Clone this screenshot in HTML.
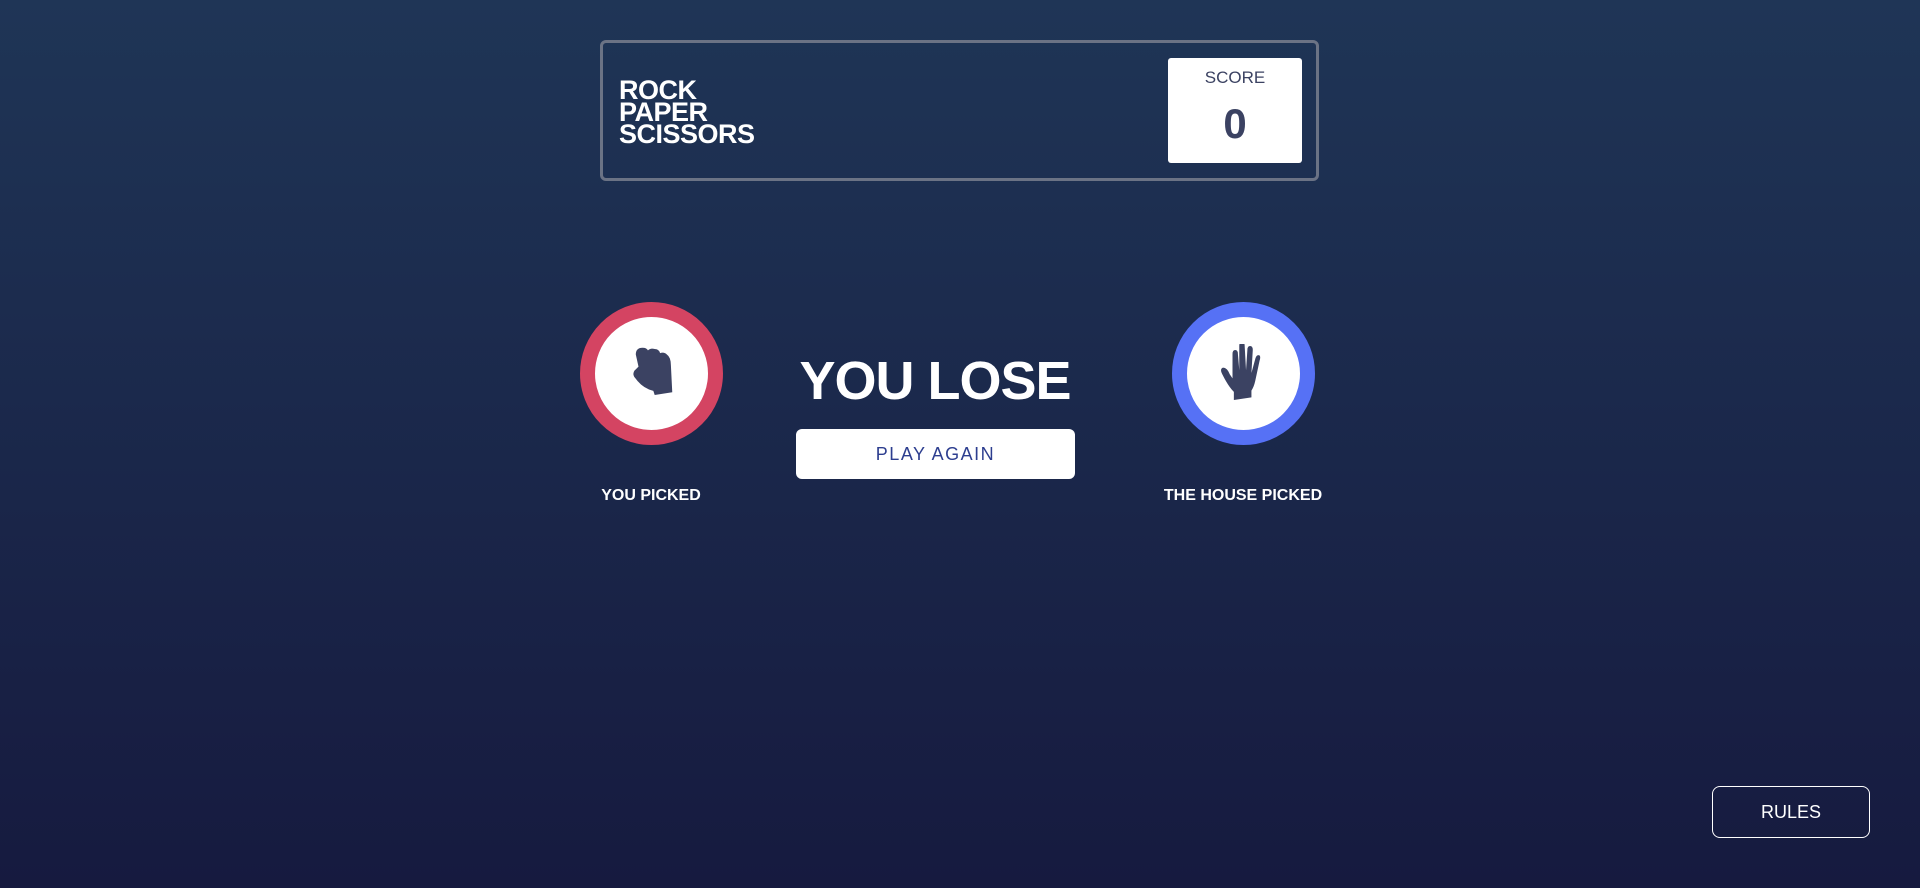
<!DOCTYPE html>
<html><head><meta charset="utf-8"><style>
*{margin:0;padding:0;box-sizing:border-box}
body{width:1920px;height:888px;overflow:hidden;background:linear-gradient(#1f3556,#161a3f);font-family:"Liberation Sans",sans-serif;color:#fff;position:relative}
.hdr{position:absolute;left:600px;top:40px;width:719px;height:141px;border:3px solid #6b7385;border-radius:6px}
.title{position:absolute;left:16px;top:36px;font-weight:bold;font-size:27px;line-height:22px;letter-spacing:-0.5px}
.score{position:absolute;left:565px;top:15px;width:134px;height:105px;background:#fff;border-radius:3px;text-align:center;color:#3b4262}
.score .l{font-size:17px;margin-top:10px}
.score .n{font-size:42px;font-weight:bold;margin-top:12px;color:#3b4262}
.c{position:absolute;width:143px;height:143px;border-radius:50%;background:#fff}
.c svg{position:absolute}
.lbl{position:absolute;font-weight:bold;font-size:16px;text-align:center;width:300px}
.res{position:absolute;left:735px;top:350px;width:400px;text-align:center;font-weight:bold;font-size:54px;letter-spacing:-1px}
.btn{position:absolute;left:796px;top:429px;width:279px;height:50px;background:#fff;border-radius:6px;color:#2d3e8f;font-size:18px;letter-spacing:1.5px;text-align:center;line-height:50px}
.rules{position:absolute;left:1712px;top:786px;width:158px;height:52px;border:1px solid #fff;border-radius:8px;text-align:center;line-height:50px;font-size:18px}
</style></head><body>
<div class="hdr"><div class="title">ROCK<br>PAPER<br>SCISSORS</div>
<div class="score"><div class="l">SCORE</div><div class="n">0</div></div></div>

<div class="c" style="left:580px;top:302px;border:15px solid #d44462"><svg width="54" height="54" viewBox="12 5 40 40" style="left:30px;top:28px"><path d="M20 12 q0-5 5-5 q3 0 4 2 q2-2 5-1 q3 0 4 3 q3-1 5 1 q3 2 3 8 l1 20 l-13 2 l-1-3 q-8-2-13-9 q-3-3-1-6 l3-3 z" fill="#3b4262"/></svg></div>
<div class="c" style="left:1172px;top:302px;border:15px solid #5671f5"><svg width="50" height="58" viewBox="11 7 37 42" style="left:32px;top:27px"><path d="M22 48 l0-6 q-4-4-8-12 q-3-5 0-6 q3 0 5 5 l2 3 l0-18 q0-3 2-3 q2 0 2 3 l1 12 l0-18 q0-3 2-3 q2 0 2 3 l1 18 l1-15 q0-3 2-3 q2 0 2 3 l-1 17 l3-11 q1-3 3-2 q1 1 0 4 l-3 14 q-1 5-3 8 l0 5 z" fill="#3b4262"/></svg></div>
<div class="lbl" style="left:501px;top:487px">YOU PICKED</div>
<div class="lbl" style="left:1093px;top:487px">THE HOUSE PICKED</div>
<div class="res">YOU LOSE</div>
<div class="btn">PLAY AGAIN</div>
<div class="rules">RULES</div>
</body></html>
